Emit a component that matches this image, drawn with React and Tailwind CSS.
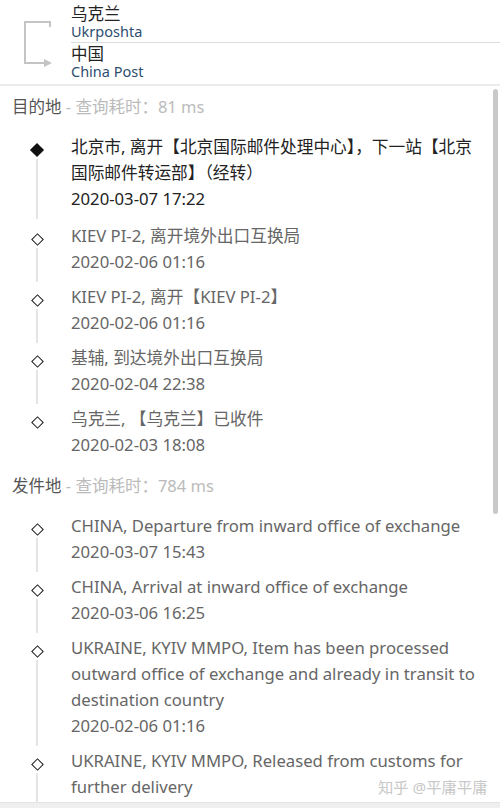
import React from "react";

const FONT = { fontFamily: '"Noto Sans", "Noto Sans CJK SC", sans-serif' };

const sec1 = [
  { lines: ["北京市, 离开【北京国际邮件处理中心】，下一站【北京", "国际邮件转运部】（经转）"], date: "2020-03-07 17:22", active: true },
  { lines: ["KIEV PI-2, 离开境外出口互换局"], date: "2020-02-06 01:16" },
  { lines: ["KIEV PI-2, 离开【KIEV PI-2】"], date: "2020-02-06 01:16" },
  { lines: ["基辅, 到达境外出口互换局"], date: "2020-02-04 22:38" },
  { lines: ["乌克兰, 【乌克兰】已收件"], date: "2020-02-03 18:08" },
];

const sec2 = [
  { lines: ["CHINA, Departure from inward office of exchange"], date: "2020-03-07 15:43" },
  { lines: ["CHINA, Arrival at inward office of exchange"], date: "2020-03-06 16:25" },
  { lines: ["UKRAINE, KYIV MMPO, Item has been processed", "outward office of exchange and already in transit to", "destination country"], date: "2020-02-06 01:16" },
  { lines: ["UKRAINE, KYIV MMPO, Released from customs for", "further delivery"], date: "", continues: true },
];

function Item({ item, last }) {
  const color = item.active ? "text-[#222]" : "text-[#666]";
  const rows = item.date ? [...item.lines, item.date] : item.lines;
  return (
    <div className={item.active ? "flex pt-[5px] pb-[6px]" : "flex pt-[5px] pb-[4px]"}>
      <div className="relative w-[71px] shrink-0">
        {item.active ? (
          <div className="absolute left-[32px] top-[11px] w-[10px] h-[10px] rotate-45 bg-[#111]" />
        ) : (
          <div className="absolute left-[32.5px] top-[11.5px] w-[9px] h-[9px] rotate-45 bg-white border-[1.6px] border-[#1a1a1a]" />
        )}
        {(!last || item.continues) && (
          <div
            className={
              item.continues
                ? "absolute left-[36px] top-[25px] w-[2px] bottom-[-40px] bg-[#e4e4e4]"
                : "absolute left-[36px] top-[25px] w-[2px] bottom-[-7px] bg-[#e4e4e4]"
            }
          />
        )}
      </div>
      <div className={`text-[16.7px] ${color} pr-3`}>
        {rows.map((l, i) => (
          <div key={i} className="h-[26px] leading-[26px] whitespace-nowrap">{l}</div>
        ))}
      </div>
    </div>
  );
}

function SectionHeader({ label, ms }) {
  return (
    <div className="h-[43px] flex items-center pl-3 text-[16.5px]">
      <span className="text-[#555]">{label}</span>
      <span className="text-[#bbb]">&nbsp;- 查询耗时：{ms} ms</span>
    </div>
  );
}

export default function App() {
  return (
    <div className="relative w-[500px] h-[808px] overflow-hidden bg-white" style={FONT}>
      {/* header */}
      <div className="flex h-[86px] border-b-2 border-[#ececec]">
        <div className="w-[71px] shrink-0 relative">
          <svg className="absolute left-0 top-0" width="71" height="84" viewBox="0 0 71 84">
            <path d="M50 27 V22 H25 V63 H44" fill="none" stroke="#c4c4c4" strokeWidth="2" />
            <path d="M44 59 L52 63 L44 67 Z" fill="#c4c4c4" />
          </svg>
        </div>
        <div className="flex-1 flex flex-col">
          <div className="h-[43px] border-b border-[#dcdcdc] pt-[5px]">
            <div className="h-[18px] text-[16.5px] leading-[18px] text-[#222]">乌克兰</div>
            <div className="h-[17px] text-[14.5px] leading-[17px] text-[#2d4e70]">Ukrposhta</div>
          </div>
          <div className="pt-[2px]">
            <div className="h-[18px] text-[16.5px] leading-[18px] text-[#222]">中国</div>
            <div className="h-[17px] text-[14.5px] leading-[17px] text-[#2d4e70]">China Post</div>
          </div>
        </div>
      </div>

      <SectionHeader label="目的地" ms="81" />
      {sec1.map((it, i) => (
        <Item key={i} item={it} last={i === sec1.length - 1} />
      ))}
      <div className="mt-[3px]">
        <SectionHeader label="发件地" ms="784" />
      </div>
      {sec2.map((it, i) => (
        <Item key={i} item={it} last={i === sec2.length - 1} />
      ))}

      {/* scrollbar */}
      <div className="absolute left-[493px] top-[89px] w-[5px] h-[425px] rounded-full bg-[#c9c9c9]" />
      {/* watermark */}
      <div className="absolute left-[378px] top-[777px] text-[15.3px] leading-[20px] text-[#c8c8c8] whitespace-nowrap">
        知乎 @平庸平庸
      </div>
      {/* bottom band */}
      <div className="absolute left-0 right-0 bottom-0 h-[6px] bg-[#efefef] border-t border-[#e4e4e4]" />
    </div>
  );
}
